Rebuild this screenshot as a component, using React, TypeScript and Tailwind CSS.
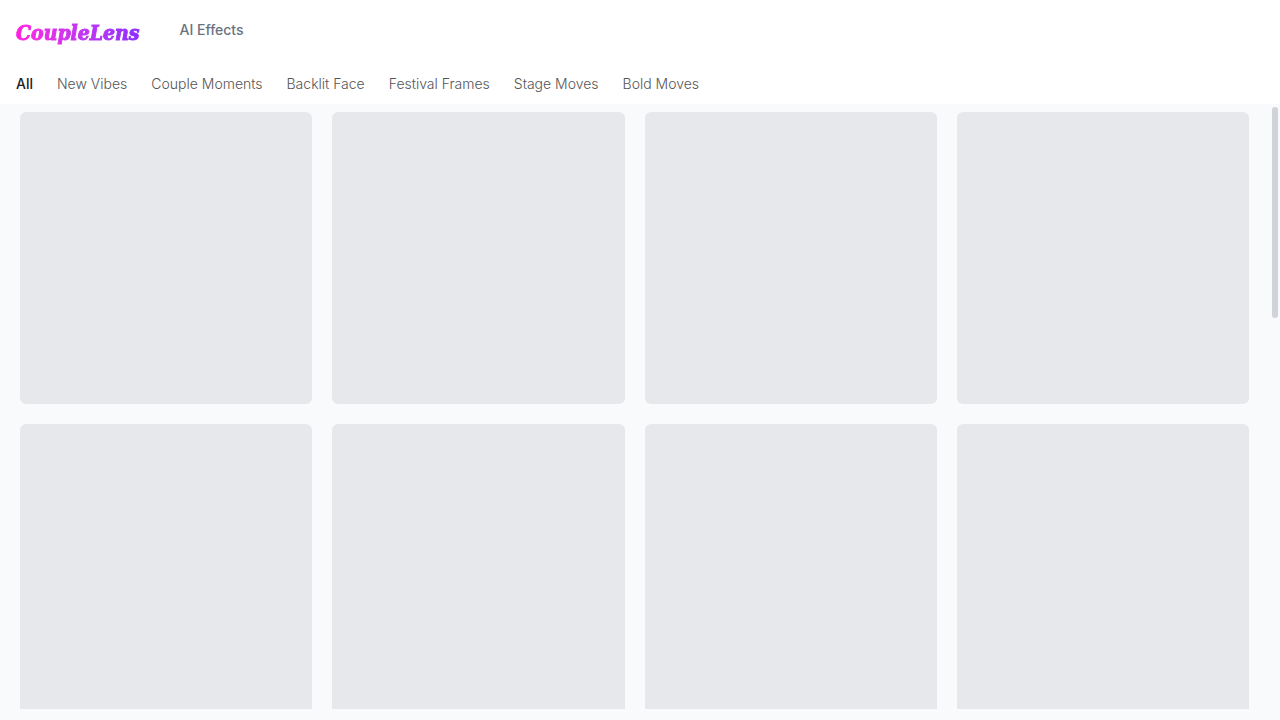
// =============================================================
//  App.tsx

const categories = [
    'All',
    'New Vibes',
    'Couple Moments',
    'Backlit Face',
    'Festival Frames',
    'Stage Moves',
    'Bold Moves',
];

const PLACEHOLDER_COUNT = 20;

// ── Header ───────────────────────────────────────────────────
function Header() {
    return (
        <header className="flex items-center gap-9 h-16 px-4">
            <a
                href="#home"
                className="bg-linear-to-r from-[#ff1fe0] to-[#8a2bff] bg-clip-text pt-0.5 pr-1 text-transparent [-webkit-text-stroke:1px_transparent] font-['DejaVu_Serif_Condensed','DejaVu_Serif',serif] text-[21px] leading-7 font-bold italic"
            >
                CoupleLens
            </a>
            <nav>
                <a href="#effects" className="block pb-1 text-sm font-medium text-gray-500">
                    AI Effects
                </a>
            </nav>
        </header>
    );
}

// ── Category tabs ────────────────────────────────────────────
function CategoryTabs({ active }: { active: string }) {
    return (
        <nav className="flex h-10 items-center gap-6 px-4">
            {categories.map((name) => (
                <button
                    key={name}
                    type="button"
                    className={`text-sm whitespace-nowrap ${
                        name === active ? 'font-medium text-[#222222]' : 'font-light text-[#555555]'
                    }`}
                >
                    {name}
                </button>
            ))}
        </nav>
    );
}

// ── Effect card skeleton ─────────────────────────────────────
function EffectCardSkeleton() {
    return <div className="aspect-square rounded-md bg-[#e7e8ec]" />;
}

// ── Effects page ─────────────────────────────────────────────
export default function App() {
    return (
        <div className="flex h-screen flex-col bg-white font-[Inter,sans-serif]">
            <Header />
            <CategoryTabs active="All" />

            <main className="relative min-h-0 flex-1 bg-[#f9fafc] pr-[11px] pb-[11px]">
                <div className="h-full overflow-y-auto px-5 pt-2 [scrollbar-width:none]">
                    <div className="grid grid-cols-4 gap-5">
                        {Array.from({ length: PLACEHOLDER_COUNT }, (_, i) => (
                            <EffectCardSkeleton key={i} />
                        ))}
                    </div>
                </div>

                {/* Scrollbar thumb */}
                <div className="absolute top-[3px] right-0.5 h-[35%] max-h-[211px] w-1.5 rounded-full bg-[#d1d3da]" />
            </main>
        </div>
    );
}
